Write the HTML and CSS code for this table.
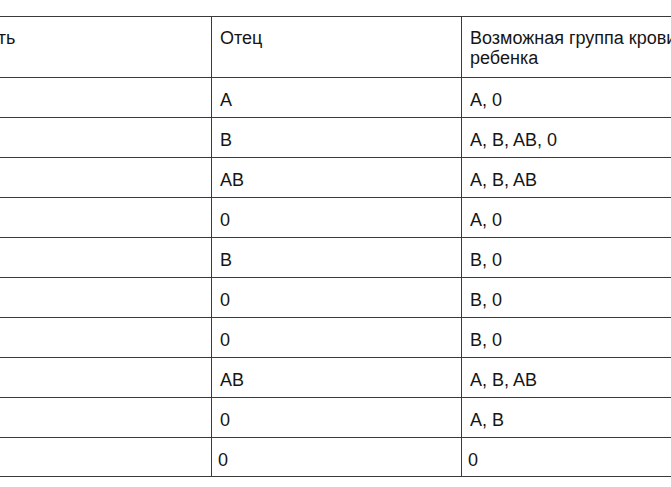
FILE: index.html
```html
<!DOCTYPE html>
<html lang="ru">
<head>
<meta charset="utf-8">
<title>Группы крови</title>
<link rel="stylesheet" href="styles.css">
</head>
<body>
<table class="blood">
  <colgroup>
    <col class="c-mother">
    <col class="c-father">
    <col class="c-child">
  </colgroup>
  <tr class="head">
    <td>Мать</td>
    <td>Отец</td>
    <td>Возможная группа крови<br>ребенка</td>
  </tr>
  <tr><td>A</td><td>A</td><td>A, 0</td></tr>
  <tr><td>A</td><td>B</td><td>A, B, AB, 0</td></tr>
  <tr><td>A</td><td>AB</td><td>A, B, AB</td></tr>
  <tr><td>A</td><td>0</td><td>A, 0</td></tr>
  <tr><td>B</td><td>B</td><td>B, 0</td></tr>
  <tr><td>B</td><td>0</td><td>B, 0</td></tr>
  <tr><td>B</td><td>0</td><td>B, 0</td></tr>
  <tr><td>AB</td><td>AB</td><td>A, B, AB</td></tr>
  <tr><td>AB</td><td>0</td><td>A, B</td></tr>
  <tr class="last"><td>0</td><td>0</td><td>0</td></tr>
</table>
</body>
</html>
```
FILE: styles.css
```css
html, body {
  margin: 0;
  padding: 0;
  background: #ffffff;
  overflow: hidden;
}

.blood {
  border-collapse: collapse;
  table-layout: fixed;
  width: 757px;
  margin: 16px 0 0 -36px;
  font-family: "Liberation Sans", Arial, sans-serif;
  font-size: 18px;
  line-height: 20px;
  color: #151515;
}

.c-mother { width: 247px; }
.c-father { width: 250px; }
.c-child { width: 260px; }

.blood td {
  border: 1px solid #3a3a3a;
  padding: 12px 8px 7px 8px;
  vertical-align: top;
  white-space: nowrap;
}

.blood .head td {
  padding-top: 11px;
  padding-bottom: 9px;
}

.blood .last td {
  padding-left: 6px;
  padding-bottom: 6px;
}
```
